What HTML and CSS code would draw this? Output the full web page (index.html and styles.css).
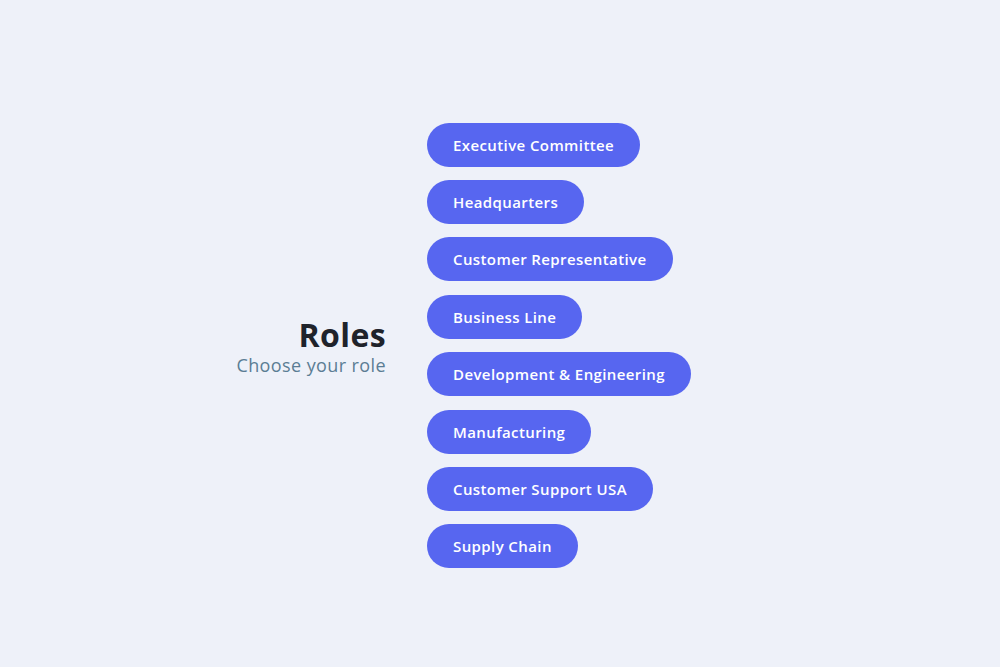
FILE: index.html
```html
<!DOCTYPE html>
<html lang="en">
  <head>
    <meta charset="UTF-8" />
    <meta name="viewport" content="width=device-width, initial-scale=1.0" />
    <title>Roles</title>
    <link rel="stylesheet" href="styles.css">
  </head>
  <body>
    <div id="page">
      <div class="heading">
        <h1>Roles</h1>
        <p>Choose your role</p>
      </div>
      <ul class="roles">
        <li><button>Executive Committee</button></li>
        <li><button>Headquarters</button></li>
        <li><button>Customer Representative</button></li>
        <li><button>Business Line</button></li>
        <li><button>Development &amp; Engineering</button></li>
        <li><button>Manufacturing</button></li>
        <li><button>Customer Support USA</button></li>
        <li><button>Supply Chain</button></li>
      </ul>
    </div>
  </body>
</html>
```

FILE: styles.css
```css
html, body {
  margin: 0;
  padding: 0;
}

body {
  background: #eef1f9;
  font-family: "Open Sans", "Noto Sans", sans-serif;
}

#page {
  box-sizing: border-box;
  height: 667px;
  padding-top: 24px;
  display: flex;
  justify-content: center;
  align-items: center;
  gap: 41px;
}

.heading {
  width: 200px;
  padding-top: 4px;
  text-align: right;
}

.heading h1 {
  margin: 0;
  font-size: 32px;
  font-weight: 700;
  color: #1f232b;
  line-height: 36px;
  letter-spacing: 0.4px;
}

.heading p {
  margin: 0;
  font-size: 18px;
  color: #5b7d94;
  line-height: 25px;
  letter-spacing: 0.4px;
}

.roles {
  width: 387px;
  margin: 0;
  padding: 0;
  list-style: none;
  display: flex;
  flex-direction: column;
  align-items: flex-start;
  gap: 13.4px;
}

.roles button {
  height: 44px;
  padding: 0 26px;
  border: none;
  border-radius: 22px;
  background: #5766f0;
  color: #ffffff;
  font-family: "Open Sans", "Noto Sans", sans-serif;
  font-size: 15px;
  font-weight: 600;
  letter-spacing: 0.4px;
  cursor: pointer;
}
```
